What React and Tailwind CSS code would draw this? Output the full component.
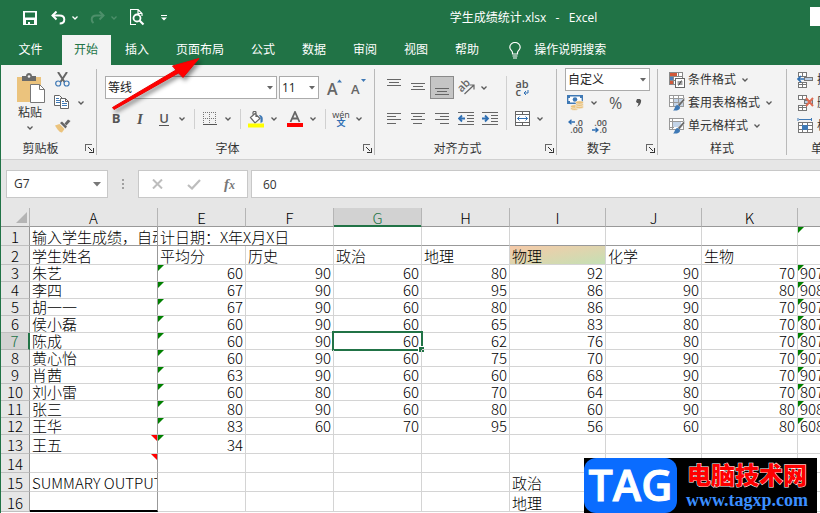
import React, { useState } from 'react';

const Chevron = ({ className = 'text-[#5a5a5a]' }) => (
    <svg width="6" height="4" viewBox="0 0 6 4" className={className} fill="none" stroke="currentColor" strokeWidth="1.3">
        <path d="M0.5 0.5 3 3 5.5 0.5" />
    </svg>
);

const MoreButton = ({ label, className }) => (
    <button aria-label={label} className="flex h-6 w-3 shrink-0 items-center justify-center">
        <Chevron className={className} />
    </button>
);

const IconButton = ({ label, active, children }) => (
    <button
        aria-label={label}
        className={active
            ? 'flex h-[23px] w-6 shrink-0 items-center justify-center border border-[#8a8a8a] bg-[#c5c5c5]'
            : 'flex h-[23px] w-6 shrink-0 items-center justify-center'}
    >
        {children}
    </button>
);

const Triangle = () => (
    <svg width="6" height="4" viewBox="0 0 6 4"><path d="M0 0h6L3 3.5z" fill="#666" /></svg>
);

const Combo = ({ label, value, className }) => (
    <div className={className}>
        <select
            aria-label={label}
            defaultValue={value}
            className="block h-[23px] w-full appearance-none border border-[#ababab] bg-white pl-0.5 text-xs leading-[21px] text-[#222] outline-none"
        >
            <option>{value}</option>
        </select>
        <span className="pointer-events-none absolute right-1 top-0 flex h-[23px] items-center"><Triangle /></span>
    </div>
);

const Divider = () => <div className="my-1 w-px shrink-0 bg-[#b9b9b9]" />;
const SmallDivider = () => <div className="ml-[6px] mr-[3px] h-5 w-px shrink-0 bg-[#d0d0d0]" />;

const Launcher = ({ label }) => (
    <button aria-label={label} className="flex h-4 w-4 items-center justify-end pr-0.5">
        <svg width="9" height="9" viewBox="0 0 9 9" fill="none" stroke="#666" shapeRendering="crispEdges">
            <path d="M0.5 7V0.5H7" />
            <path d="M3 3l4 4M8 4v4H4" stroke="#333" />
        </svg>
    </button>
);

const Group = ({ title, launcher, className, children }) => (
    <section className={className}>
        <div className="flex-1">{children}</div>
        <div className="flex h-[19px] items-start">
            <span className="flex-1 whitespace-nowrap text-center text-xs leading-[18px]">{title}</span>
            {launcher && <Launcher label={title} />}
        </div>
    </section>
);

/* ---------- icons ---------- */

const SaveIcon = () => (
    <svg width="14" height="14" viewBox="0 0 14 14" fill="#fff">
        <path fillRule="evenodd" d="M0 0h14v14H0zM2 1.5V6.5h10v-5zM3 9v4h2v-2h2v2h4V9z" />
    </svg>
);

const UndoIcon = () => (
    <svg width="15" height="14" viewBox="0 0 15 14" fill="none" stroke="#fff" strokeWidth="2">
        <path d="M5.5 0.5 1.5 4.5l4 4" />
        <path d="M1.5 4.5h7c3 0 4.8 1.6 4.8 4s-1.8 4-4.6 4" />
    </svg>
);

const RedoIcon = () => (
    <svg width="15" height="14" viewBox="0 0 15 14" fill="none" stroke="#4d8f6a" strokeWidth="2">
        <path d="M9.5 0.5l4 4-4 4" />
        <path d="M13.5 4.5h-7c-3 0-4.8 1.6-4.8 4 0 1.4.6 2.6 1.8 3.6" />
    </svg>
);

const PreviewIcon = () => (
    <svg width="15" height="17" viewBox="0 0 15 17" fill="none" stroke="#fff">
        <path d="M6 15.5H.5V.5h7.500l4 4V7M8 .5v4h4" strokeWidth="1.2" />
        <circle cx="7" cy="9" r="3.500" strokeWidth="1.8" />
        <path d="M9.500 11.500 13.500 15.500" strokeWidth="2.200" />
    </svg>
);

const BulbIcon = () => (
    <svg width="12" height="17" viewBox="0 0 12 17" fill="none" stroke="#fff" strokeWidth="1.2">
        <path d="M3.500 12V10.500C3.500 9 .8 8 .8 5.300A5.200 4.800 0 0 1 11.200 5.300C11.200 8 8.500 9 8.500 10.500V12z" />
        <path d="M3.500 14h5M4 16h4" />
    </svg>
);

const PasteIcon = () => (
    <svg width="29" height="31" viewBox="0 0 29 31">
        <path d="M0 4h24v25H0z" fill="#ebc37d" />
        <path d="M5 3h4c0-4 6-4 6 0h4v5H5z" fill="#6a6a6a" />
        <circle cx="12" cy="3.500" r="1.300" fill="#f3f3f3" />
        <path d="M13.500 11.500h9l5 5v13h-14z" fill="#fff" stroke="#777" />
        <path d="M22.500 11.500v5h5" fill="none" stroke="#777" />
    </svg>
);

const CutIcon = () => (
    <svg width="15" height="15" viewBox="0 0 15 15" fill="none">
        <path d="M3 0l6.500 10M12 0L5.500 10" stroke="#666" strokeWidth="2" />
        <circle cx="3.200" cy="11.500" r="2.500" stroke="#3f79b5" strokeWidth="1.200" />
        <circle cx="11.600" cy="11.500" r="2.500" stroke="#3f79b5" strokeWidth="1.200" />
    </svg>
);

const CopyIcon = () => (
    <svg width="16" height="15" viewBox="0 0 16 15" fill="#fff" stroke="#666">
        <path d="M.5.5h5l3 3v7h-8z" />
        <path d="M2 3.500h3M2 5.500h4M2 7.500h4" stroke="#3f79b5" />
        <path d="M6.500 3.500h5l3 3v7h-8z" />
        <path d="M11.500 3.500v3h3" fill="none" />
        <path d="M8 6.500h2M8 8.500h5M8 10.500h5" stroke="#3f79b5" />
    </svg>
);

const BrushIcon = () => (
    <svg width="16" height="14" viewBox="0 0 16 14">
        <path d="M0 6.500 4.500 5l5 5L7 13.500C5 14 2 10 0 6.500z" fill="#ebc37d" />
        <path d="M5 4l2-1.500 5 5L10.500 9.500z" fill="#666" />
        <path d="M9.500 4.500 13 .5 15.500 2 11.500 6.500z" fill="#666" />
    </svg>
);

const BorderIcon = () => (
    <svg width="14" height="14" viewBox="0 0 14 14" fill="none" stroke="#777" shapeRendering="crispEdges">
        <path d="M0 .5h14M0 6.500h14M.5 0v12M6.500 0v12M12.500 0v12" strokeDasharray="1 1" />
        <path d="M0 12.500h14" strokeWidth="1" stroke="#555" />
    </svg>
);

const FillIcon = () => (
    <svg width="16" height="17" viewBox="0 0 16 17">
        <path d="M5 3.500V1.500C5 0 8 0 8 1.500V6M2.500 6.500 7 2.500l5 5-5 4.500z" fill="#fff" stroke="#666" strokeWidth="1.200" />
        <path d="M11 4c3 0 4.500 2 3.500 7l-2 1V7z" fill="#3f79b5" />
        <path d="M0 12.500h16v4H0z" fill="#ff0" />
    </svg>
);

const FontColorIcon = () => (
    <svg width="16" height="16" viewBox="0 0 16 16">
        <path d="M3.500 11 8 1l4.500 10M5 7.500h6" fill="none" stroke="#666" strokeWidth="1.800" />
        <path d="M0 12h16v4H0z" fill="#f00" />
    </svg>
);

const GrowFont = ({ down }) => (
    <span className="relative block h-[18px] w-[14px]">
        <span className={down ? 'absolute bottom-0 left-0 text-[13px] font-semibold leading-4 text-[#666]' : 'absolute bottom-0 left-0 text-base font-semibold leading-4 text-[#666]'}>A</span>
        <svg width="5" height="4" viewBox="0 0 5 4" className="absolute -right-px top-0">
            <path d={down ? 'M0 0h5L2.500 3z' : 'M0 3.500h5L2.500 .5z'} fill="#3f79b5" />
        </svg>
    </span>
);

const Lines = ({ rows }) => (
    <svg width="16" height="19" viewBox="0 0 16 19" fill="#666" shapeRendering="crispEdges">
        {rows.map(([x, y, w]) => <rect key={y} x={x} y={y} width={w} height="1" />)}
    </svg>
);

const IndentIcon = ({ right }) => (
    <svg width="16" height="14" viewBox="0 0 16 14">
        <path d="M0 .5h16M9 3.500h7M9 6.500h7M9 9.500h7M0 12.500h16" stroke="#666" shapeRendering="crispEdges" />
        <path d={right ? 'M0 6.500h5M3 3.500l3 3-3 3' : 'M7 6.500H2M4 3.500l-3 3 3 3'} fill="none" stroke="#2f6fb3" strokeWidth="1.800" />
    </svg>
);

const RotateIcon = () => (
    <svg width="17" height="16" viewBox="0 0 17 16" className="overflow-visible">
        <text x="6" y="9" textAnchor="middle" transform="rotate(-45 6 6)" fontSize="11" fontWeight="600" fill="#666">ab</text>
        <path d="M6.500 14 15.500 5.500M11.500 5H16v4.500" fill="none" stroke="#666" strokeWidth="1.200" />
    </svg>
);

const WrapIcon = () => (
    <span className="relative block text-left text-[11px] font-semibold leading-2 text-[#555]">
        ab<br />c
        <svg width="6" height="6" viewBox="0 0 6 6" className="absolute bottom-0 right-0">
            <path d="M5 0v3H1M3 1 1 3l2 2" fill="none" stroke="#2f6fb3" />
        </svg>
    </span>
);

const MergeIcon = () => (
    <svg width="15" height="15" viewBox="0 0 15 15" fill="none" stroke="#666">
        <path d="M.5.500h14v14H.5zM.5 3.500h14M.5 11.500h14M7.500 0v3M7.500 12v3" fill="#fff" shapeRendering="crispEdges" />
        <path d="M2.500 7.500h10M4.500 5.500l-2 2 2 2M10.500 5.500l2 2-2 2" stroke="#2f6fb3" />
    </svg>
);

const MoneyIcon = () => (
    <svg width="17" height="16" viewBox="0 0 17 16">
        <path d="M.7.7h14.600v7.600H.7z" fill="#fff" stroke="#3f79b5" strokeWidth="1.400" />
        <circle cx="8" cy="4.500" r="2.300" fill="#3f79b5" />
        <path d="M1 1h2v2H1zM13 1h2v2h-2zM1 6h2v2H1z" fill="#3f79b5" />
        <g fill="#ebc37d" stroke="#f3f3f3" strokeWidth=".6">
            <ellipse cx="7.500" cy="13.500" rx="4" ry="1.800" />
            <ellipse cx="7.500" cy="11.500" rx="4" ry="1.800" />
            <ellipse cx="12.500" cy="12" rx="4" ry="1.800" />
            <ellipse cx="12.500" cy="9.700" rx="4" ry="1.800" />
            <ellipse cx="12.500" cy="7.500" rx="4" ry="1.800" />
        </g>
    </svg>
);

const DecimalIcon = ({ more }) => (
    <span className="relative block w-[15px] text-right text-[9px] font-semibold leading-[7px] text-[#555]">
        {more ? '.0' : '.00'}<br />{more ? '.00' : '.0'}
        <svg width="7" height="6" viewBox="0 0 7 6" className={more ? 'absolute left-0 top-0' : 'absolute bottom-0 left-0'}>
            <path d={more ? 'M7 3H1M3.500 .8 1 3l2.500 2.200' : 'M0 3h6M3.500 .8 6 3 3.500 5.200'} fill="none" stroke="#2f6fb3" strokeWidth="1.300" />
        </svg>
    </span>
);

const ConditionalIcon = () => (
    <svg width="16" height="16" viewBox="0 0 16 16" fill="none">
        <path d="M.5.5h13v12H.5z" fill="#fff" />
        <path d="M1 5h3v3H1z" fill="#4a7ebb" />
        <path d="M1 9h4v3H1z" fill="#d2593a" />
        <path d="M.5.5h13v12H.5zM.5 4.500h13M.5 8.500h6M4.500 4v8M9.500 0v4" stroke="#888" shapeRendering="crispEdges" />
        <path d="M1 1h7v3H1z" fill="#d2593a" />
        <path d="M6.500 6.500h9v9h-9z" fill="#fff" stroke="#666" shapeRendering="crispEdges" />
        <path d="M8.500 10h5M8.500 12h5M12.500 8.500l-3 5" stroke="#444" />
    </svg>
);

const TableStyleIcon = ({ single }) => (
    <svg width="16" height="16" viewBox="0 0 16 16" fill="none">
        <path d="M.5.5h14v11H.5z" fill="#fff" />
        <path d={single ? 'M4 4h8v5H4z' : 'M5 4h10v8H5z'} fill="#c3d4e8" />
        <path d={single ? 'M.5.5h14v11H.5zM.5 3.500h14M.5 9.500h4M3.500 0v12' : 'M.5.5h14v11H.5zM.5 3.500h14M.5 7.500h14M4.500 0v12M9.500 0v12'} stroke="#999" shapeRendering="crispEdges" />
        <path d="M15.500 2.500v3L10.500 11.500l-2-1.500z" fill="#666" stroke="#f3f3f3" strokeWidth=".5" />
        <path d="M8 10c3 .5 4 3 2 4.500C8 16 5 15.500 4 15.500c2-1 1.500-4.500 4-5.500z" fill="#3f79b5" />
    </svg>
);

const CellIcon = ({ kind }) => (
    <svg width="17" height="16" viewBox="0 0 17 16" fill="none">
        {kind === 'format' ? (
            <>
                <path d="M1.500 4.500h14v10H1.500zM1.500 7.500h14M1.500 11.500h14M5.500 4v11M10.500 4v11" fill="#fff" stroke="#777" shapeRendering="crispEdges" />
                <path d="M5 7h6v5H5z" fill="#3f79b5" />
                <path d="M2 1.500h12M1 0v3M14.500 0v3" stroke="#3f79b5" />
            </>
        ) : (
            <>
                <path d="M1.500.5h8v4h-8zM5.500 0v4M1.500 10.500h8v5h-8zM1.500 12.500h8M5.500 10v5" stroke="#777" fill="#fff" shapeRendering="crispEdges" />
                <path d="M7.500 5.500h8v3h-8z" fill="#b9cde5" stroke="#777" shapeRendering="crispEdges" />
                {kind === 'insert'
                    ? <path d="M7 7H1.500M4 4 1 7l3 3" stroke="#2f6fb3" strokeWidth="1.600" />
                    : <path d="M9 3l7 8M16 3l-7 8" stroke="#dc6a50" strokeWidth="1.900" />}
            </>
        )}
    </svg>
);

/* ---------- window parts ---------- */

const TitleBar = () => (
    <header className="flex h-[35px] items-center text-white">
        <div className="flex w-[236px] shrink-0 items-center pl-[22px]">
            <button aria-label="保存" className="mr-[14px]"><SaveIcon /></button>
            <button aria-label="撤消"><UndoIcon /></button>
            <span className="ml-[3px] mr-[9px]"><MoreButton label="撤消列表" className="text-white" /></span>
            <button aria-label="恢复"><RedoIcon /></button>
            <span className="ml-[3px] mr-[10px]"><MoreButton label="恢复列表" className="text-[#4d8f6a]" /></span>
            <button aria-label="打印预览"><PreviewIcon /></button>
            <button aria-label="自定义" className="ml-[16px]">
                <svg width="6" height="6" viewBox="0 0 6 6" fill="#fff"><path d="M0 0h6v1H0zM0 2.500h6L3 5.500z" /></svg>
            </button>
        </div>
        <h1 className="flex-1 whitespace-pre text-center text-xs">学生成绩统计.xlsx   -   Excel</h1>
        <div className="mb-[2px] h-[19px] w-[10px] shrink-0 bg-white" />
    </header>
);

const TABS = ['开始', '插入', '页面布局', '公式', '数据', '审阅', '视图', '帮助'];

const TabStrip = () => {
    const [active, setActive] = useState('开始');
    return (
        <nav className="flex h-[30px] gap-0.5 text-xs text-white">
            <button className="w-[59px] shrink-0">文件</button>
            {TABS.map((tab) => (
                <button
                    key={tab}
                    onClick={() => setActive(tab)}
                    className={tab === active
                        ? 'shrink-0 bg-[#f3f3f3] pl-3 pr-[13px] text-[#217346]'
                        : 'shrink-0 pl-3 pr-[13px]'}
                >
                    {tab}
                </button>
            ))}
            <button className="ml-[15px] flex shrink-0 items-center gap-[13px]">
                <BulbIcon />
                <span>操作说明搜索</span>
            </button>
        </nav>
    );
};

const StyleRow = ({ icon, label }) => (
    <button className="flex h-[23px] items-center whitespace-nowrap text-xs">
        {icon}
        <span className="ml-[3px] mr-[6px]">{label}</span>
        <Chevron />
    </button>
);

const Ribbon = () => (
    <div className="flex h-[94px] overflow-hidden bg-[#f3f3f3] text-[#333]">
        <Group title="剪贴板" launcher className="flex w-[95px] shrink-0 flex-col">
            <div className="flex pt-[3px]">
                <button className="flex w-[52px] flex-col items-center pl-[6px] pt-[5px] text-xs">
                    <span className="pl-[3px]"><PasteIcon /></span>
                    <span className="leading-[18px]">粘贴</span>
                    <span className="flex h-3 items-center"><Chevron /></span>
                </button>
                <div className="flex flex-col">
                    <button aria-label="剪切" className="flex h-[23px] items-center pl-0.5"><CutIcon /></button>
                    <div className="flex h-[23px] items-center">
                        <button aria-label="复制" className="pl-px pr-[5px]"><CopyIcon /></button>
                        <MoreButton label="复制选项" />
                    </div>
                    <button aria-label="格式刷" className="flex h-[23px] items-center pl-0.5"><BrushIcon /></button>
                </div>
            </div>
        </Group>
        <Divider />
        <Group title="字体" launcher className="flex w-[277px] shrink-0 flex-col">
            <div className="flex items-center pl-2 pt-[11px]">
                <Combo label="字体名称" value="等线" className="relative w-[172px]" />
                <Combo label="字号" value="11" className="relative ml-0.5 w-10" />
                <button aria-label="增大字号" className="ml-2"><GrowFont /></button>
                <button aria-label="减小字号" className="ml-[10px]"><GrowFont down /></button>
            </div>
            <div className="flex items-center pl-[7px] pt-2">
                <IconButton label="加粗"><b className="text-[13px] text-[#555]">B</b></IconButton>
                <IconButton label="倾斜"><i className="font-['Liberation_Serif'] text-[15px] font-bold text-[#555]">I</i></IconButton>
                <IconButton label="下划线"><span className="border-b border-[#555] text-[13px] font-semibold leading-[13px] text-[#555]">U</span></IconButton>
                <MoreButton label="下划线选项" />
                <SmallDivider />
                <IconButton label="边框"><BorderIcon /></IconButton>
                <MoreButton label="边框选项" />
                <SmallDivider />
                <IconButton label="填充颜色"><FillIcon /></IconButton>
                <MoreButton label="填充颜色选项" />
                <span className="w-[3px]" />
                <IconButton label="字体颜色"><FontColorIcon /></IconButton>
                <MoreButton label="字体颜色选项" />
                <SmallDivider />
                <IconButton label="拼音">
                    <span className="flex flex-col items-center text-[9px] leading-2 text-[#444]">
                        wén<span className="font-bold text-[#2f6fb3]">文</span>
                    </span>
                </IconButton>
                <MoreButton label="拼音选项" />
            </div>
        </Group>
        <Divider />
        <Group title="对齐方式" launcher className="flex w-[181px] shrink-0 flex-col">
            <div className="flex pl-[7px] pt-[11px]">
                <div className="flex flex-col gap-2">
                    <div className="flex h-[23px] items-center">
                        <IconButton label="顶端对齐"><Lines rows={[[1, 1, 14], [3, 4, 10], [1, 7, 14]]} /></IconButton>
                        <IconButton label="垂直居中"><Lines rows={[[1, 5, 14], [3, 8, 10], [1, 11, 14]]} /></IconButton>
                        <IconButton label="底端对齐" active><Lines rows={[[1, 10, 14], [3, 13, 10], [1, 16, 14]]} /></IconButton>
                        <IconButton label="方向"><RotateIcon /></IconButton>
                        <MoreButton label="方向选项" />
                    </div>
                    <div className="flex h-[23px] items-center">
                        <IconButton label="左对齐"><Lines rows={[[1, 4, 14], [1, 7, 9], [1, 10, 14], [1, 14, 9]]} /></IconButton>
                        <IconButton label="居中"><Lines rows={[[1, 4, 14], [3, 7, 9], [1, 10, 14], [3, 14, 9]]} /></IconButton>
                        <IconButton label="右对齐"><Lines rows={[[1, 4, 14], [6, 7, 9], [1, 10, 14], [6, 14, 9]]} /></IconButton>
                        <IconButton label="减少缩进"><IndentIcon /></IconButton>
                        <IconButton label="增加缩进"><IndentIcon right /></IconButton>
                    </div>
                </div>
                <div className="ml-1 mr-[3px] w-px bg-[#d0d0d0]" />
                <div className="flex flex-col gap-2">
                    <IconButton label="自动换行"><WrapIcon /></IconButton>
                    <div className="flex h-[23px] items-center">
                        <IconButton label="合并后居中"><MergeIcon /></IconButton>
                        <MoreButton label="合并选项" />
                    </div>
                </div>
            </div>
        </Group>
        <Divider />
        <Group title="数字" launcher className="flex w-[100px] shrink-0 flex-col">
            <div className="pl-2 pt-[3px]">
                <Combo label="数字格式" value="自定义" className="relative w-[85px]" />
                <div className="flex h-[23px] items-center">
                    <button aria-label="会计数字格式" className="pl-0.5"><MoneyIcon /></button>
                    <span className="ml-1"><MoreButton label="会计格式选项" /></span>
                    <button className="ml-[9px] text-base leading-5 text-[#555]">%</button>
                    <button aria-label="千位分隔" className="ml-[14px]">
                        <svg width="6" height="8" viewBox="0 0 6 8"><path d="M1 0h3l1.200 1.500C5.200 5 3 7 1 8c1-1.500 1.500-2.500 1.300-4H1L0 2.500z" fill="#555" /></svg>
                    </button>
                </div>
                <div className="flex h-[23px] items-center gap-[9px] pl-[3px]">
                    <button aria-label="增加小数位数"><DecimalIcon more /></button>
                    <button aria-label="减少小数位数"><DecimalIcon /></button>
                </div>
            </div>
        </Group>
        <Divider />
        <Group title="样式" className="flex w-[128px] shrink-0 flex-col">
            <div className="flex flex-col items-start pl-[11px] pt-[3px]">
                <StyleRow icon={<ConditionalIcon />} label="条件格式" />
                <StyleRow icon={<TableStyleIcon />} label="套用表格格式" />
                <StyleRow icon={<TableStyleIcon single />} label="单元格样式" />
            </div>
        </Group>
        <Divider />
        <Group title="单元格" className="flex w-[84px] shrink-0 flex-col">
            <div className="flex flex-col items-start pl-[10px] pt-[3px]">
                <StyleRow icon={<CellIcon kind="insert" />} label="插入" />
                <StyleRow icon={<CellIcon kind="delete" />} label="删除" />
                <StyleRow icon={<CellIcon kind="format" />} label="格式" />
            </div>
        </Group>
    </div>
);

const FormulaBar = () => (
    <div className="flex border-t border-[#d0d0d0] bg-[#e6e6e6] pb-[10px] pl-[5px] pt-[10px] text-xs text-[#333]">
        <div className="flex h-7 w-[102px] shrink-0 items-center border border-[#c8c8c8] bg-white pl-[7px] pr-[6px]">
            <input aria-label="名称框" defaultValue="G7" className="min-w-0 flex-1 outline-none" />
            <button aria-label="名称列表"><svg width="8" height="5" viewBox="0 0 8 5"><path d="M0 0h8L4 4.500z" fill="#777" /></svg></button>
        </div>
        <div className="flex w-[30px] shrink-0 items-center justify-center">
            <svg width="2" height="10" viewBox="0 0 2 10" fill="#a0a0a0"><path d="M0 0h2v2H0zM0 4h2v2H0zM0 8h2v2H0z" /></svg>
        </div>
        <div className="mr-[3px] flex h-7 w-[110px] shrink-0 items-center justify-between border border-[#c8c8c8] bg-white pl-[13px] pr-3">
            <button aria-label="取消"><svg width="11" height="10" viewBox="0 0 11 10"><path d="M1 .5l9 9M10 .5l-9 9" stroke="#bdbdbd" strokeWidth="2" /></svg></button>
            <button aria-label="输入"><svg width="14" height="11" viewBox="0 0 14 11"><path d="M1 6l4 3.500L13 1" fill="none" stroke="#bdbdbd" strokeWidth="2.200" /></svg></button>
            <button aria-label="插入函数" className="font-['Liberation_Serif'] text-[15px] font-bold italic leading-5 text-[#777]">f<span className="text-xs">x</span></button>
        </div>
        <input aria-label="编辑栏" defaultValue="60" className="h-7 min-w-0 flex-1 border-y border-l border-[#c8c8c8] bg-white pl-[11px] outline-none" />
    </div>
);

const COLUMNS = ['A', 'E', 'F', 'G', 'H', 'I', 'J', 'K', ''];

const SCORES = [
    ['朱艺', 60, 90, 60, 80, 92, 90, 70, '907'],
    ['李四', 67, 90, 60, 95, 86, 90, 80, '908'],
    ['胡一一', 67, 90, 60, 80, 86, 90, 70, '907'],
    ['侯小磊', 60, 90, 60, 65, 83, 80, 70, '807'],
    ['陈成', 60, 90, 60, 62, 76, 80, 70, '807'],
    ['黄心怡', 60, 90, 60, 75, 70, 90, 70, '907'],
    ['肖茜', 63, 90, 60, 60, 68, 90, 70, '907'],
    ['刘小雷', 60, 80, 60, 70, 64, 80, 70, '807'],
    ['张三', 80, 90, 60, 80, 60, 90, 80, '908'],
    ['王华', 83, 60, 70, 95, 56, 60, 80, '608'],
];

const ROWS = [
    ['输入学生成绩，自动', '计日期：X年X月X日', '', '', '', '', '', '', ''],
    ['学生姓名', '平均分', '历史', '政治', '地理', '物理', '化学', '生物', ''],
    ...SCORES,
    ['王五', 34, '', '', '', '', '', '', ''],
    ['', '', '', '', '', '', '', '', ''],
    ['SUMMARY OUTPUT', '', '', '', '', '政治', '', '', ''],
    ['', '', '', '', '', '地理', '', '', ''],
];

const CornerMark = ({ note }) => (
    <svg width="6" height="6" viewBox="0 0 6 6" className={note ? 'absolute right-0 top-0' : 'absolute left-0 top-0'}>
        <path d={note ? 'M0 0h6v6z' : 'M0 0h6L0 6z'} fill={note ? '#f00' : '#008000'} />
    </svg>
);

const Cell = ({ row, col, value }) => {
    const merged = row === 1 && col === 1;
    const selected = row === 7 && col === 3;
    const flagged = (col === 1 && row >= 3 && row <= 13) || (col === 8 && (row === 1 || (row >= 3 && row <= 12)));
    const noted = col === 0 && (row === 13 || row === 14);

    let look = 'relative border-b p-0 align-bottom';
    look += row === 1 ? ' border-b-[#999]' : row === 16 && col === 0 ? ' border-b-2 border-b-black' : ' border-b-[#d4d4d4]';
    if (col < 8) look += col === 0 ? ' border-r border-r-[#999]' : ' border-r border-r-[#d4d4d4]';
    if (row === 2 && col === 5) look += ' bg-linear-to-br from-[#f6c9a8] to-[#c3e0b4]';

    let text = 'whitespace-nowrap pl-0.5 leading-4';
    if (typeof value === 'number') text = 'whitespace-nowrap pr-0.5 text-right leading-4';
    else if (col === 0) text = 'overflow-x-clip whitespace-nowrap pl-0.5 leading-4';

    return (
        <td colSpan={merged ? 2 : 1} className={look}>
            <div className={text}>{value}</div>
            {flagged && <CornerMark />}
            {noted && <CornerMark note />}
            {selected && (
                <div className="absolute -bottom-0.5 -left-0.5 -right-0.5 -top-0.5 border-2 border-[#217346]">
                    <span className="absolute -bottom-[3px] -right-[3px] h-[6px] w-[6px] border-l border-t border-white bg-[#217346]" />
                </div>
            )}
        </td>
    );
};

const rowHeight = (row) => {
    if (row === 16) return 'h-5';
    return row >= 3 && row <= 12 ? 'h-[17px]' : 'h-[19px]';
};

const Sheet = () => (
    <table className="w-full table-fixed border-separate border-spacing-0 bg-white font-['Noto_Sans_CJK_SC',sans-serif] text-[15px] font-light text-black">
        <colgroup>
            <col className="w-[29px]" />
            <col className="w-[128px]" />
            <col className="w-[88px]" />
            <col className="w-[88px]" />
            <col className="w-[88px]" />
            <col className="w-[88px]" />
            <col className="w-24" />
            <col className="w-24" />
            <col className="w-24" />
            <col />
        </colgroup>
        <thead>
            <tr className="h-[19px]">
                <th className="border-b border-r border-[#999] border-r-[#b5b5b5] bg-[#e6e6e6] p-0">
                    <svg width="11" height="11" viewBox="0 0 11 11" className="ml-auto mr-0.5"><path d="M11 0v11H0z" fill="#b4b4b4" /></svg>
                </th>
                {COLUMNS.map((name, i) => (
                    <th
                        key={i}
                        className={name === 'G'
                            ? 'border-b border-r border-b-[#217346] border-r-[#b5b5b5] bg-[#d2d2d2] p-0 align-bottom font-light leading-4 text-[#217346] shadow-[inset_0_-1px_0_#217346]'
                            : name === ''
                                ? 'border-b border-[#999] bg-[#e6e6e6] p-0'
                                : 'border-b border-r border-[#999] border-r-[#b5b5b5] bg-[#e6e6e6] p-0 align-bottom font-light leading-4 text-black'}
                    >
                        {name}
                    </th>
                ))}
            </tr>
        </thead>
        <tbody>
            {ROWS.map((cells, r) => (
                <tr key={r} className={rowHeight(r + 1)}>
                    <th
                        className={r === 6
                            ? 'border-b border-r-2 border-b-[#b5b5b5] border-r-[#217346] bg-[#d2d2d2] p-0 align-bottom font-light leading-4 text-[#217346]'
                            : 'border-b border-r border-b-[#c0c0c0] border-r-[#999] bg-[#e6e6e6] p-0 align-bottom font-light leading-4 text-black'}
                    >
                        {r + 1}
                    </th>
                    {cells.map((value, c) => (
                        r === 0 && c === 2 ? null : <Cell key={c} row={r + 1} col={c} value={value} />
                    ))}
                </tr>
            ))}
        </tbody>
    </table>
);

const Arrow = () => (
    <svg width="100" height="60" viewBox="0 0 100 60" className="pointer-events-none absolute left-[106px] top-[55px] drop-shadow-[2px_3px_2px_rgba(0,0,0,0.45)]">
        <path d="M5.500 52.500 69 15 65.500 11 92 3.500 76 22.500 71.500 18 7 54.500z" fill="#f00" stroke="#e00" strokeLinejoin="round" />
    </svg>
);

const Watermark = () => (
    <div className="absolute bottom-0 right-[3px] flex h-[55px] w-[233px] bg-black">
        <div className="flex w-[93px] items-center justify-center rounded-xl bg-[#0a6cff] pb-0.5 text-[43px] font-semibold leading-[53px] text-white [-webkit-text-stroke:1px_#fff]">TAG</div>
        <div className="flex flex-1 flex-col items-center justify-center">
            <span className="font-['Noto_Sans_CJK_SC'] text-2xl font-black leading-7 text-[#f00] [paint-order:stroke] [-webkit-text-stroke:1px_#fff]">电脑技术网</span>
            <span className="font-['Liberation_Serif'] text-lg font-bold leading-6 text-[#3b8fff]">www.tagxp.com</span>
        </div>
    </div>
);

const App = () => (
    <div className="relative flex h-screen flex-col overflow-hidden border-l border-[#217346] bg-[#217346] font-['Open_Sans','Noto_Sans_CJK_SC',sans-serif]">
        <TitleBar />
        <TabStrip />
        <Ribbon />
        <FormulaBar />
        <main className="min-h-0 flex-1 overflow-hidden bg-white">
            <Sheet />
        </main>
        <Arrow />
        <Watermark />
    </div>
);

export default App;
